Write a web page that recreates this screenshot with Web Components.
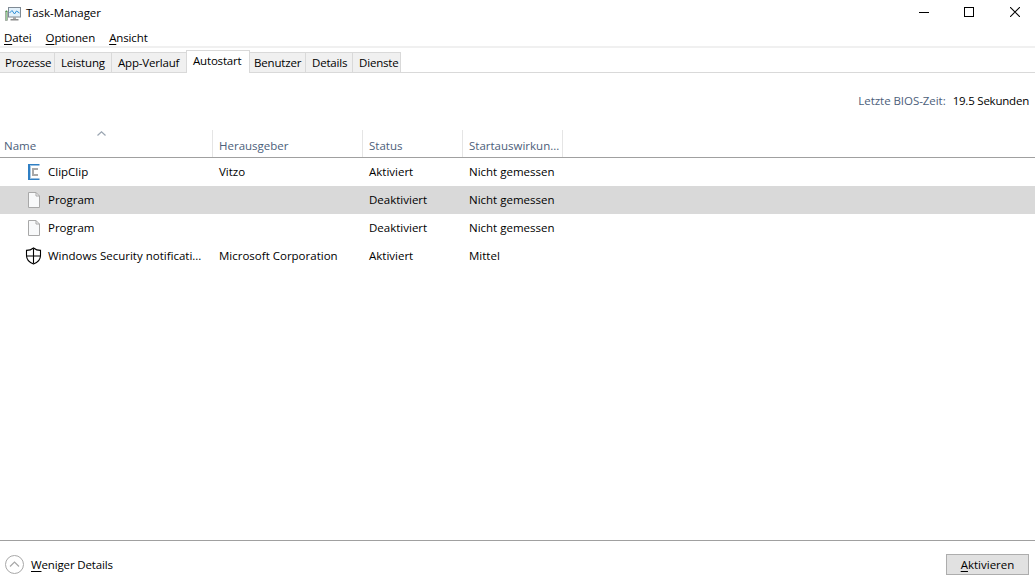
<!DOCTYPE html>
<html lang="de">
<head>
<meta charset="utf-8">
<title>Task-Manager</title>
<style>
html, body { margin: 0; height: 100%; background: #fff; overflow: hidden; }
body { font: 11.5px "Open Sans", "Noto Sans", sans-serif; color: #000; }
</style>
</head>
<body>
<task-manager>
    <title-bar>Task-Manager</title-bar>
    <menu-bar></menu-bar>
    <tab-strip></tab-strip>
    <bios-time></bios-time>
    <startup-table></startup-table>
    <footer-bar></footer-bar>
</task-manager>

<script>
class TaskManager extends HTMLElement {
    constructor() {
        super();
        this.attachShadow({mode: "open"}).innerHTML = `
        <style>
        :host { display: flex; flex-direction: column; width: 1035px; height: 584px; overflow: hidden; }
        </style>
        <slot></slot>`;
    }
}

class TitleBar extends HTMLElement {
    constructor() {
        super();
        this.attachShadow({mode: "open"}).innerHTML = `
        <style>
        :host { display: flex; align-items: center; height: 28px; padding-left: 5px; color: #000; }
        svg.app { margin-right: 5px; flex: none; }
        .label { flex: 1; position: relative; top: -2px; letter-spacing: -.05px; }
        .win { display: flex; margin-right: -3px; position: relative; top: -2px; }
        .win div { box-sizing: border-box; width: 46px; height: 24px; display: flex; align-items: center; justify-content: center; }
        .win div:first-child { padding-left: 2px; }
        </style>
        <svg class="app" width="16" height="16" viewBox="0 0 16 16">
            <rect x="0.5" y="5.5" width="2" height="9" fill="#9ad09a" stroke="#8a8a8a" stroke-width=".6"/>
            <rect x="0.8" y="4.5" width="1.4" height="1.5" fill="#4fa04f"/>
            <rect x="3.5" y="1.5" width="12" height="9.5" fill="#e3f1fb" stroke="#7f8a94"/>
            <path d="M4.5 7 L7 4.5 L9.5 8 L11.5 5 L14.5 7" fill="none" stroke="#2f8fd8" stroke-width="1"/>
            <rect x="8" y="11" width="3" height="2" fill="#a8a8a8"/>
            <rect x="5.5" y="13" width="8" height="1.5" fill="#8c8c8c"/>
        </svg>
        <span class="label"><slot></slot></span>
        <div class="win">
            <div><svg width="10" height="10"><rect x="0" y="5" width="10" height="1" fill="#000"/></svg></div>
            <div><svg width="10" height="10"><rect x=".5" y=".5" width="9" height="9" fill="none" stroke="#000"/></svg></div>
            <div><svg width="10" height="10"><path d="M0 0 L10 10 M10 0 L0 10" stroke="#000" stroke-width="1.05"/></svg></div>
        </div>`;
    }
}

class MenuBar extends HTMLElement {
    constructor() {
        super();
        this.attachShadow({mode: "open"}).innerHTML = `
        <style>
        :host { display: flex; gap: 14px; height: 18px; padding-left: 4px; border-bottom: 2px solid #f0f0f0; line-height: 20px; letter-spacing: -.12px; }
        u { text-underline-offset: 2px; }
        </style>
        <span><u>D</u>atei</span>
        <span><u>O</u>ptionen</span>
        <span><u>A</u>nsicht</span>`;
    }
}

class TabStrip extends HTMLElement {
    constructor() {
        super();
        const tabs = [
            ["Prozesse", 56, 5], ["Leistung", 58, 6], ["App-Verlauf", 76, 6], ["Autostart", 64, 6, true],
            ["Benutzer", 57, 4], ["Details", 48, 6], ["Dienste", 49, 6]
        ];
        const html = tabs.map(([name, width, pad, active]) =>
            `<div class="tab${active ? " active" : ""}" style="width:${width}px;padding-left:${pad}px">${name}</div>`).join("");
        this.attachShadow({mode: "open"}).innerHTML = `
        <style>
        :host { display: flex; align-items: flex-end; height: 24px; border-bottom: 1px solid #d9d9d9; letter-spacing: -.18px; }
        .tab { box-sizing: border-box; height: 20px; line-height: 20px; white-space: nowrap; background: #f0f0f0; border: 1px solid #d9d9d9; border-bottom: 0; margin-left: -1px; }
        .tab:first-child { margin-left: 0; border-left: 0; }
        .active { position: relative; height: 23px; line-height: 20px; background: #fff; margin-bottom: -1px; z-index: 1; }
        </style>
        ${html}`;
    }
}

class BiosTime extends HTMLElement {
    constructor() {
        super();
        this.attachShadow({mode: "open"}).innerHTML = `
        <style>
        :host { display: flex; justify-content: flex-end; gap: 7px; height: 57px; padding: 20px 6px 0 0; box-sizing: border-box; }
        .key { color: #4c607a; letter-spacing: -.05px; }
        .val { letter-spacing: -.22px; }
        </style>
        <span class="key">Letzte BIOS-Zeit:</span><span class="val">19.5 Sekunden</span>`;
    }
}

class StartupTable extends HTMLElement {
    constructor() {
        super();
        const icons = {
            clip: `<svg width="16" height="18" viewBox="0 0 16 18"><path d="M2 1 H13.5 V2.6 H4 V15.4 H13.5 V17 H2 Z" fill="#2f7fc4"/><rect x="4" y="2.6" width="1" height="12.8" fill="#a9cbe6"/><path d="M6 5 H12 V7 H8 V11 H12 V13 H6 Z" fill="#a8a8a8"/></svg>`,
            file: `<svg width="16" height="18" viewBox="0 0 16 18"><path d="M2.5 1.5 H10 L13.5 5 V16.5 H2.5 Z" fill="#f8f9fa" stroke="#a8a8a8"/><path d="M10 1.5 V5 H13.5" fill="none" stroke="#a8a8a8"/></svg>`,
            shield: `<svg width="18" height="18" viewBox="0 0 18 18"><path d="M9.5 1 C7.5 2.6 5 3.4 2.5 3.4 V8.5 C2.5 12.5 5.5 15.5 9.5 17 C13.5 15.5 16.5 12.5 16.5 8.5 V3.4 C14 3.4 11.5 2.6 9.5 1 Z" fill="#fff" stroke="#000" stroke-width="1.1"/><path d="M9.5 1.5 V16.5 M2.5 9 H16.5" stroke="#000" stroke-width="1.1"/></svg>`
        };
        const rows = [
            ["clip", "ClipClip", "Vitzo", "Aktiviert", "Nicht gemessen"],
            ["file", "Program", "", "Deaktiviert", "Nicht gemessen", true],
            ["file", "Program", "", "Deaktiviert", "Nicht gemessen"],
            ["shield", "Windows Security notificati...", "Microsoft Corporation", "Aktiviert", "Mittel"]
        ];
        const body = rows.map(([icon, name, publisher, status, impact, selected]) => `
            <div class="row${selected ? " selected" : ""}">
                <div class="name"><span class="icon">${icons[icon]}</span>${name}</div>
                <div>${publisher}</div>
                <div>${status}</div>
                <div>${impact}</div>
            </div>`).join("");
        this.attachShadow({mode: "open"}).innerHTML = `
        <style>
        :host { display: block; flex: 1; }
        .head, .row { display: grid; grid-template-columns: 213px 150px 100px 100px; }
        .head { position: relative; height: 28px; border-bottom: 1px solid #a0a0a0; color: #4c607a; box-sizing: border-box; }
        .head div { box-sizing: border-box; padding: 7px 0 0 6px; line-height: 17px; border-right: 1px solid #e5e5e5; }
        .head div:nth-of-type(1) { padding-left: 4px; }
        .sort { position: absolute; left: 97px; top: 1px; }
        .row { height: 28px; line-height: 28px; }
        .row > div { padding-left: 6px; white-space: nowrap; }
        .row .name { display: flex; align-items: center; padding-left: 0; }
        .icon { width: 48px; flex: none; display: flex; justify-content: flex-end; padding-right: 6px; box-sizing: border-box; }
        .selected { background: #d9d9d9; }
        </style>
        <div class="head">
            <svg class="sort" width="9" height="5" viewBox="0 0 9 5"><path d="M0.5 4.5 L4.5 0.8 L8.5 4.5" fill="none" stroke="#9aa5b1" stroke-width="1.2"/></svg>
            <div>Name</div><div>Herausgeber</div><div>Status</div><div>Startauswirkun...</div>
        </div>
        ${body}`;
    }
}

class FooterBar extends HTMLElement {
    constructor() {
        super();
        this.attachShadow({mode: "open"}).innerHTML = `
        <style>
        :host { display: flex; align-items: center; justify-content: space-between; height: 44px; box-sizing: border-box; border-top: 1px solid #a0a0a0; padding: 3px 6px 0 5px; }
        .details { display: flex; align-items: center; gap: 7px; letter-spacing: -.14px; }
        u { text-underline-offset: 2px; }
        .btn { box-sizing: border-box; width: 83px; height: 21px; line-height: 19px; text-align: center; background: #e1e1e1; border: 1px solid #adadad; }
        </style>
        <div class="details">
            <svg width="19" height="19" viewBox="0 0 19 19">
                <circle cx="9.5" cy="9.5" r="9" fill="#fff" stroke="#a8a8a8"/>
                <path d="M5 11.5 L9.5 7 L14 11.5" fill="none" stroke="#a8a8a8" stroke-width="1.2"/>
            </svg>
            <span><u>W</u>eniger Details</span>
        </div>
        <div class="btn"><u>A</u>ktivieren</div>`;
    }
}

customElements.define("task-manager", TaskManager);
customElements.define("title-bar", TitleBar);
customElements.define("menu-bar", MenuBar);
customElements.define("tab-strip", TabStrip);
customElements.define("bios-time", BiosTime);
customElements.define("startup-table", StartupTable);
customElements.define("footer-bar", FooterBar);
</script>
</body>
</html>
